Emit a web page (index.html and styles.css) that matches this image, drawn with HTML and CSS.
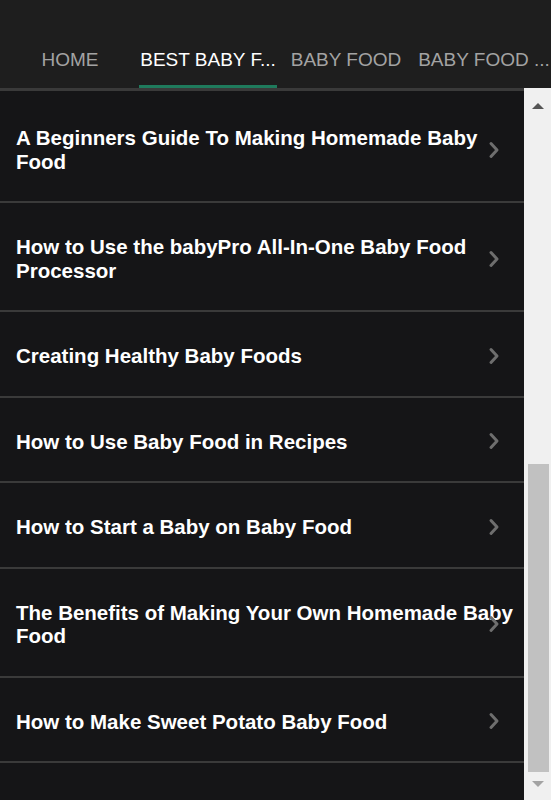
FILE: index.html
```html
<!DOCTYPE html>
<html lang="en">
<head>
<meta charset="utf-8">
<title>Baby Food</title>
<link rel="stylesheet" href="styles.css">
</head>
<body>
<header class="header">
  <nav class="tabs">
    <div class="tab">HOME</div>
    <div class="tab tab-active">BEST BABY F...</div>
    <div class="tab">BABY FOOD</div>
    <div class="tab">BABY FOOD ...</div>
  </nav>
</header>
<main class="main">
  <ul class="list">
    <li class="row"><span class="row-title">A Beginners Guide To Making Homemade Baby Food</span><svg class="chev" viewBox="0 0 12 18" width="12" height="18"><polyline points="3,2.5 9,9 3,15.5"/></svg></li>
    <li class="row"><span class="row-title">How to Use the babyPro All-In-One Baby Food Processor</span><svg class="chev" viewBox="0 0 12 18" width="12" height="18"><polyline points="3,2.5 9,9 3,15.5"/></svg></li>
    <li class="row"><span class="row-title">Creating Healthy Baby Foods</span><svg class="chev" viewBox="0 0 12 18" width="12" height="18"><polyline points="3,2.5 9,9 3,15.5"/></svg></li>
    <li class="row"><span class="row-title">How to Use Baby Food in Recipes</span><svg class="chev" viewBox="0 0 12 18" width="12" height="18"><polyline points="3,2.5 9,9 3,15.5"/></svg></li>
    <li class="row"><span class="row-title">How to Start a Baby on Baby Food</span><svg class="chev" viewBox="0 0 12 18" width="12" height="18"><polyline points="3,2.5 9,9 3,15.5"/></svg></li>
    <li class="row"><span class="row-title">The Benefits of Making Your Own Homemade Baby Food</span><svg class="chev" viewBox="0 0 12 18" width="12" height="18"><polyline points="3,2.5 9,9 3,15.5"/></svg></li>
    <li class="row"><span class="row-title">How to Make Sweet Potato Baby Food</span><svg class="chev" viewBox="0 0 12 18" width="12" height="18"><polyline points="3,2.5 9,9 3,15.5"/></svg></li>
  </ul>
  <div class="scrollbar">
    <div class="sb-btn"><span class="arrow-up"></span></div>
    <div class="sb-track">
      <div class="sb-space"></div>
      <div class="sb-thumb"></div>
    </div>
    <div class="sb-btn"><span class="arrow-down"></span></div>
  </div>
</main>
</body>
</html>
```
FILE: styles.css
```css
html, body {
  margin: 0;
  padding: 0;
}
body {
  width: 551px;
  height: 800px;
  overflow: hidden;
  background: #151517;
  font-family: "Liberation Sans", Arial, sans-serif;
}
.header {
  height: 88px;
  background: #1e1e1e;
  overflow: hidden;
}
.tabs {
  display: flex;
  height: 100%;
}
.tab {
  flex: 0 0 138px;
  box-sizing: border-box;
  padding-top: 35px;
  border-bottom: 3px solid transparent;
  display: flex;
  align-items: center;
  justify-content: center;
  white-space: nowrap;
  font-size: 19px;
  color: #a3a3a3;
}
.tab:first-child {
  margin-left: 1px;
}
.tab-active {
  color: #ffffff;
  border-bottom-color: #1f7a5c;
}
.main {
  display: flex;
  height: 712px;
}
.list {
  flex: 1;
  margin: 0;
  padding: 3px 0 0;
  list-style: none;
  border-top: 3px solid #3a3a3a;
  overflow: hidden;
}
.row {
  display: grid;
  padding: 32px 0 28px 16px;
  border-bottom: 2px solid #3a3a3a;
}
.row-title {
  grid-area: 1 / 1;
  padding-right: 6px;
  font-weight: bold;
  font-size: 20.5px;
  line-height: 23.5px;
  color: #ffffff;
}
.chev {
  grid-area: 1 / 1;
  justify-self: end;
  align-self: center;
  margin-right: 24px;
  fill: none;
  stroke: #6e6e6e;
  stroke-width: 3;
  stroke-linecap: round;
  stroke-linejoin: round;
}
.scrollbar {
  flex: 0 0 27px;
  display: flex;
  flex-direction: column;
  background: #f0f0f0;
}
.sb-btn {
  flex: 0 0 28px;
  display: flex;
  align-items: center;
  justify-content: center;
}
.arrow-up {
  width: 0;
  height: 0;
  border-left: 6px solid transparent;
  border-right: 6px solid transparent;
  border-bottom: 6px solid #555555;
  margin-top: 8px;
}
.arrow-down {
  width: 0;
  height: 0;
  border-left: 6px solid transparent;
  border-right: 6px solid transparent;
  border-top: 6px solid #a3a3a3;
  margin-bottom: 4px;
}
.sb-track {
  flex: 1;
  display: flex;
  flex-direction: column;
}
.sb-space {
  flex: 1;
}
.sb-thumb {
  flex: 0 0 308px;
  margin: 0 2px 0 4px;
  background: #c1c1c1;
}
```
